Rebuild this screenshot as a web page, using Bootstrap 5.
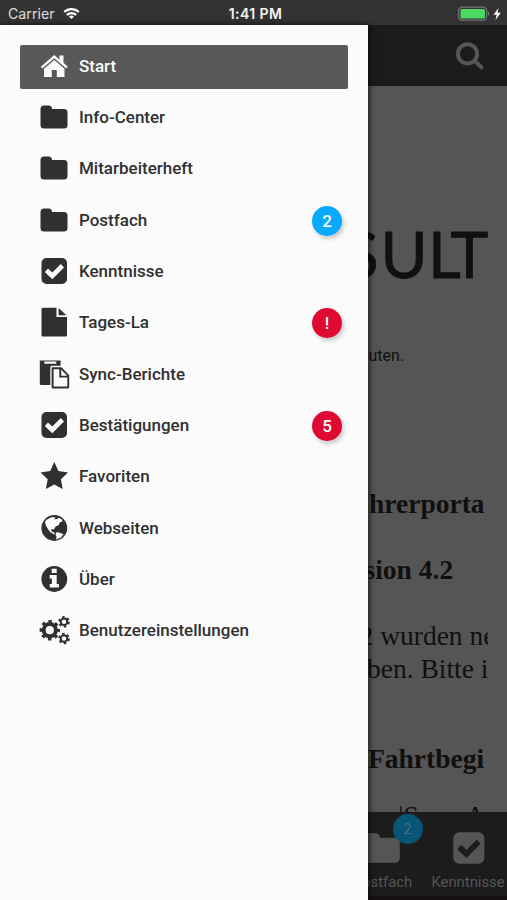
<!DOCTYPE html>
<html lang="de">
<head>
<meta charset="utf-8">
<meta name="viewport" content="width=device-width, initial-scale=1">
<title>Fahrerportal</title>
<link href="https://cdn.jsdelivr.net/npm/bootstrap@5.3.0/dist/css/bootstrap.min.css" rel="stylesheet">
<style>
body{font-family:Roboto,"Liberation Sans",sans-serif;background:#555;color:#303030}
.app{width:507px;height:900px}
.status{height:25px;background:#333;color:#f4f4f4;padding:2px 4px 0 8px;font-family:Inter,"Liberation Sans",sans-serif;line-height:23px}
.status>div{flex:1 1 0}
.carrier{color:#ddd;font-size:14.2px}
.clock{font-size:14px;font-weight:600;letter-spacing:.4px}
.drawer{width:368px;background:#fbfbfb;padding:19.500px 20px 0 20.400px;z-index:2;box-shadow:1px 0 6px rgba(0,0,0,.75)}
.drawer .list-group{gap:7.320px}
.entry{height:44px;padding:0 6px 1.500px 17.600px;border:0;border-radius:2px!important;background:transparent;color:#303030;font-size:17px;font-weight:500;line-height:22px}
.entry.active{background:#585858;color:#fafafa;margin:0}
.entry svg{width:32px;height:32px;margin-right:9px;fill:currentColor;flex:none}
.count{width:30px;height:30px;margin-top:2px;font-size:17px;font-weight:500;color:#fff;background:#de0a32;box-shadow:2px 3px 4px rgba(0,0,0,.2)}
.count.blue{background:#08aaff}
.pane{width:139px;background:#555;color:#101010}
.top{height:61px;background:#1b1b1b;padding-right:22px}
.top svg{width:30px;height:30px}
.doc{width:120px;height:726px;white-space:nowrap}
.logo{height:60px;margin-top:138px}
.hint{font-size:16px;line-height:20px;margin-top:62px;padding-left:.5px}
.serif{font-family:"Liberation Serif",serif;font-size:27.500px;line-height:33px;padding-top:120.500px}
.l1{margin-left:1px}
.l2{margin:33px 0 0 -3.500px}
.l3{margin:33px 0 0 -8.500px}
.l4{margin-left:-1px}
.l5{margin-top:57.500px}
.l6{margin:23.500px 0 0 30px}
.tabs{height:88px;background:#1c1c1c;border-bottom:4px solid #171012;color:#555;font-size:14.800px;line-height:18px;gap:19px}
.tab{width:60px;padding-top:15px}
.tab.first{margin-left:-15.500px}
.tab.second{width:73px}
.tab svg{height:42px;margin:0 auto 4px;fill:#555}
.tab-count{position:absolute;left:40px;top:2px;width:30px;height:30px;background:#075577;color:#4d7180;font-size:14px}
</style>
<script src="https://cdn.jsdelivr.net/npm/bootstrap@5.3.0/dist/js/bootstrap.bundle.min.js"></script>
</head>
<body>
<svg class="d-none">
<symbol id="folder" viewBox="0 0 32 32"><path d="M2.500 8a3.500 3.500 0 0 1 3.500-3.500h4.500A3.500 3.500 0 0 1 14 8h12a3.500 3.500 0 0 1 3.500 3.500V24a3.500 3.500 0 0 1-3.500 3.500H6A3.500 3.500 0 0 1 2.500 24z"/></symbol>
<symbol id="check" viewBox="0 0 32 32"><path fill-rule="evenodd" d="M8.500 3H24a5 5 0 0 1 5 5v16a5 5 0 0 1-5 5H8.500a5 5 0 0 1-5-5V8a5 5 0 0 1 5-5zM6.800 17l7.500 7.200L26 12.500 22.800 9 14.300 17.600 10 13.400z"/></symbol>
</svg>
<div class="app d-flex flex-column overflow-hidden">
<header class="status d-flex align-items-center">
  <div class="carrier d-flex align-items-center"><span class="me-2">Carrier</span>
    <svg width="17" height="13" viewBox="0 0 18 14" fill="none" stroke="#fff" stroke-width="2.300"><path d="M1.200 5.500a11 11 0 0 1 15.600 0M4 8.600a7.200 7.200 0 0 1 10 0"/><path d="M9 13L6.300 10.500a3.900 3.900 0 0 1 5.400 0z" fill="#fff" stroke="none"/></svg></div>
  <span class="clock">1:41 PM</span>
  <div class="d-flex justify-content-end"><svg width="46" height="16" viewBox="0 0 46 16"><rect x="1.600" y="1.200" width="28" height="13" rx="3.500" fill="none" stroke="#777" stroke-width="1.300"/><rect x="3.500" y="3" width="24.500" height="9.600" rx="1.500" fill="#4bd964"/><path d="M31 5.500q2.200 2.300 0 4.600z" fill="#888"/><path d="M41.500 2L36.500 8.700h3.200L38.500 14l5.300-7.300h-3.300z" fill="#fff"/></svg></div>
</header>
<div class="d-flex flex-grow-1">
  <nav class="drawer position-relative">
    <div class="list-group">
      <a class="list-group-item entry active d-flex align-items-center"><svg viewBox="0 0 32 32"><path d="M16.300 5L2.800 16.700l1.500 1.900L16.300 8.300l12 10.300 1.500-1.900-4.300-3.900V5.500h-4v4zM16.300 10L6 18.700V27h7.800v-7h5v7h7.700v-8.300z"/></svg>Start</a>
      <a class="list-group-item entry d-flex align-items-center"><svg><use href="#folder"/></svg>Info-Center</a>
      <a class="list-group-item entry d-flex align-items-center"><svg><use href="#folder"/></svg>Mitarbeiterheft</a>
      <a class="list-group-item entry d-flex align-items-center"><svg><use href="#folder"/></svg>Postfach<span class="count blue rounded-circle d-flex align-items-center justify-content-center ms-auto">2</span></a>
      <a class="list-group-item entry d-flex align-items-center"><svg><use href="#check"/></svg>Kenntnisse</a>
      <a class="list-group-item entry d-flex align-items-center"><svg viewBox="0 0 32 32"><path d="M4.800 1.800h13.700v9.300h10.500V29q0 1.500-1.500 1.500H4.800Q3.500 30.500 3.500 29V3.200q0-1.400 1.300-1.400zM20.600 2l7.800 7.200h-7.800z"/></svg>Tages-La<span class="count rounded-circle d-flex align-items-center justify-content-center ms-auto">!</span></a>
      <a class="list-group-item entry d-flex align-items-center"><svg viewBox="0 0 32 32"><g transform="translate(.8)"><path fill-rule="evenodd" d="M1 2.500h20.800v5.200H13q-1.500 0-1.500 1.500V27H2.500Q1 27 1 25.500zM5.500 3.400v2.400h12V3.400z"/><path fill-rule="evenodd" d="M12.800 9.300h9.900l7.700 8V29q0 1.500-1.500 1.500H14.300q-1.500 0-1.500-1.500zm2 1.900v17.400h13.700v-9h-8v-8.400zm7.600.6v6h6z"/></g></svg>Sync-Berichte</a>
      <a class="list-group-item entry d-flex align-items-center"><svg><use href="#check"/></svg>Bestätigungen<span class="count rounded-circle d-flex align-items-center justify-content-center ms-auto">5</span></a>
      <a class="list-group-item entry d-flex align-items-center"><svg viewBox="0 0 32 32"><path d="M16.300 2l4.100 9.100 9.600 1.300-7.100 6.900 1.800 9.800-8.400-4.700-8.400 4.700 1.800-9.800-7.100-6.900 9.600-1.300z"/></svg>Favoriten</a>
      <a class="list-group-item entry d-flex align-items-center"><svg viewBox="0 0 32 32"><circle cx="16.300" cy="16" r="12.900"/><path fill="#fbfbfb" d="M7 9.500Q11 5 16 5l1.500 1-1.500 1.500 3.500-.5 1-1.500 3.500 2 .5 2-2.500.7-1.500 3-3 1.300-1.500 3-2.800-.5.300 2.500 2.500.8 1 2.200-1-.3-4-2.200-3-4.500-1.500-3zM18.500 20l4 1 3 1.300-2.500 3.200-5 2 .5-3-1-2z"/></svg>Webseiten</a>
      <a class="list-group-item entry d-flex align-items-center"><svg viewBox="0 0 32 32"><path fill-rule="evenodd" d="M16.300 3.100a12.900 12.900 0 1 0 0 25.800 12.900 12.900 0 0 0 0-25.800zM13.700 5.800h5v4.100h-5zm-2 6.200h7v9h2.200v3.600h-9.200V21h2.200v-5.400h-2.200z"/></svg>Über</a>
      <a class="list-group-item entry d-flex align-items-center"><svg viewBox="0 0 32 32"><g fill="none" stroke="currentColor"><circle cx="11.800" cy="16.200" r="6.100" stroke-width="4"/><circle cx="11.800" cy="16.200" r="8.700" stroke-width="3" stroke-dasharray="3.417 3.417" stroke-dashoffset="1.700"/><circle cx="26" cy="7.800" r="3.300" stroke-width="2"/><circle cx="26" cy="7.800" r="4.800" stroke-width="2" stroke-dasharray="2.513 2.513"/><circle cx="26" cy="24.500" r="3.300" stroke-width="2"/><circle cx="26" cy="24.500" r="4.800" stroke-width="2" stroke-dasharray="2.513 2.513"/></g></svg>Benutzereinstellungen</a>
    </div>
  </nav>
  <main class="pane d-flex flex-column overflow-hidden">
    <div class="top d-flex align-items-center justify-content-end"><svg viewBox="0 0 30 30" fill="none" stroke="#555" stroke-width="4" stroke-linecap="round"><circle cx="12.500" cy="12.800" r="9.600"/><path d="M20 20l6.500 6.500"/></svg></div>
    <div class="doc overflow-hidden">
      <svg class="logo d-block" width="120" height="60" viewBox="0 0 120 60" fill="#101010" stroke="#101010" stroke-width=".8" font-family="Lato,sans-serif" font-size="64"><text x="-24 12.500 60 82.500" y="54">SULT</text></svg>
      <div class="hint">uten.</div>
      <div class="serif">
        <div class="fw-bold l1">hrerporta</div>
        <div class="fw-bold l2">sion 4.2</div>
        <div class="l3">2 wurden ne</div>
        <div class="l4">ben. Bitte i</div>
        <div class="fw-bold l5">Fahrtbegi</div>
        <div class="l6">|Soon A</div>
      </div>
    </div>
    <div class="tabs d-flex flex-shrink-0">
      <div class="tab first position-relative text-center"><svg class="d-block" width="41" viewBox="0 0 32 32"><use href="#folder"/></svg>Postfach<span class="tab-count rounded-circle d-flex align-items-center justify-content-center">2</span></div>
      <div class="tab second text-center"><svg class="d-block" width="39" viewBox="0 0 32 32"><use href="#check"/></svg>Kenntnisse</div>
    </div>
  </main>
</div>
</div>
</body>
</html>
